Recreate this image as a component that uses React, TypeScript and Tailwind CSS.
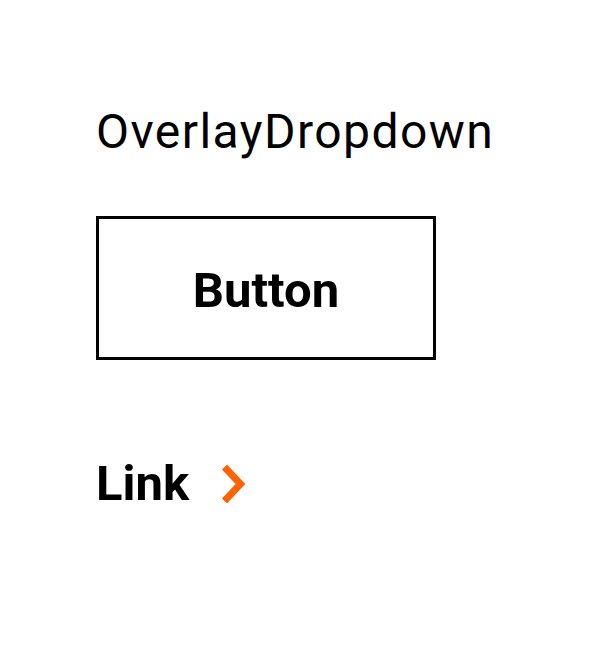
export default function App() {
  return (
    <div className="min-h-screen bg-white pl-[96px] pt-[104px] font-['Roboto',sans-serif] text-black">
      <h1 className="text-[48px] leading-[56px] font-normal tracking-[1.45px]">OverlayDropdown</h1>
      <button className="mt-[56px] flex h-[144px] w-[340px] items-center justify-center border-[3px] border-black bg-white pt-[6px] text-[49px] font-bold">
        Button
      </button>
      <a href="#" className="mt-[96px] flex items-center gap-[32px] text-[49px] font-bold leading-[56px]">
        <span>Link</span>
        <svg width="25" height="38" viewBox="0 0 25 38" fill="none">
          <path d="M3.5 2 L19.5 19 L3.5 36" stroke="#ff6200" strokeWidth="7" />
        </svg>
      </a>
    </div>
  );
}
